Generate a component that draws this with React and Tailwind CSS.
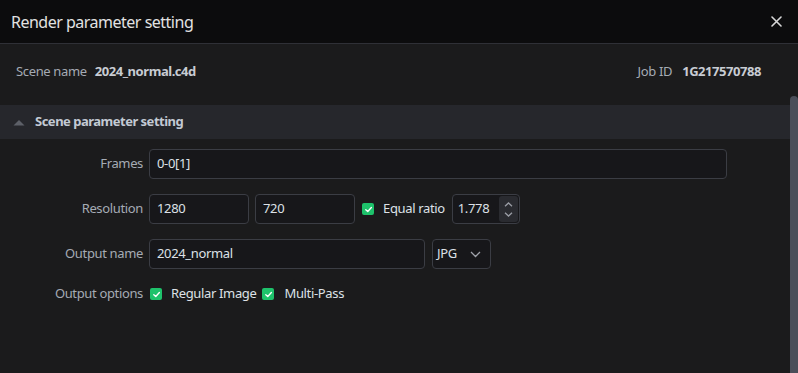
import React from "react";

const font = { fontFamily: '"Noto Sans", "Open Sans", sans-serif' };

function Check() {
  return (
    <span className="flex h-[12px] w-[12px] items-center justify-center rounded-[2px] bg-[#1ec26b]">
      <svg width="9" height="9" viewBox="0 0 10 10" fill="none">
        <path d="M2 5.2 L4.2 7.3 L8.2 2.8" stroke="#ffffff" strokeWidth="1.5" strokeLinecap="round" strokeLinejoin="round" />
      </svg>
    </span>
  );
}

function Label({ children }) {
  return <div className="w-[143px] shrink-0 text-right text-[13px] tracking-[-0.35px] text-[#a5abb4]">{children}</div>;
}

function Input({ value, className }) {
  return (
    <div className={"flex h-[30px] items-center rounded-[4px] border border-[#3b3d44] bg-[#17171a] px-[7px] text-[13px] tracking-[-0.35px] text-[#dde1e7] " + className}>
      {value}
    </div>
  );
}

export default function App() {
  return (
    <div style={font} className="flex h-[373px] w-[798px] flex-col overflow-hidden bg-[#1b1b1c]">
      <div className="flex h-[44px] shrink-0 items-center justify-between border-b border-[#2f3036] bg-[#0c0c0d] pl-[11px] pr-[16px]">
        <div className="text-[16px] tracking-[-0.5px] text-[#e2e2e2]">Render parameter setting</div>
        <svg width="11" height="11" viewBox="0 0 11 11">
          <path d="M1 1 L10 10 M10 1 L1 10" stroke="#d8d8d8" strokeWidth="1.6" strokeLinecap="round" />
        </svg>
      </div>
      <div className="relative flex-1">
        <div className="absolute right-0 top-[52px] bottom-0 w-[8px] rounded-t-[4px] bg-[#4a4e59]" />
        <div className="flex h-[61px] items-start justify-between pl-[16px] pr-[37px] pt-[18px] text-[13px] tracking-[-0.35px]">
          <div className="flex items-center">
            <span className="text-[#a5abb4]">Scene name</span>
            <span className="ml-[8px] font-bold tracking-[-0.45px] text-[#c8ccd3]">2024_normal.c4d</span>
          </div>
          <div className="flex items-center">
            <span className="text-[#a5abb4]">Job ID</span>
            <span className="ml-[10px] font-bold tracking-[-0.45px] text-[#c8ccd3]">1G217570788</span>
          </div>
        </div>
        <div className="mr-[8px] flex h-[34px] items-center bg-[#26272c] pl-[13px]">
          <svg width="12" height="7" viewBox="0 0 12 7">
            <path d="M0.5 6.5 L6 1 L11.5 6.5 Z" fill="#5d6068" />
          </svg>
          <span className="ml-[10px] text-[13px] font-bold tracking-[-0.5px] text-[#c3cad4]">Scene parameter setting</span>
        </div>
        <div className="flex flex-col gap-[15px] pt-[10px]">
          <div className="flex items-center gap-[6px]">
            <Label>Frames</Label>
            <Input value="0-0[1]" className="w-[578px]" />
          </div>
          <div className="flex items-center gap-[6px]">
            <Label>Resolution</Label>
            <Input value="1280" className="w-[100px]" />
            <Input value="720" className="w-[100px]" />
            <div className="ml-[1px] flex items-center">
              <Check />
              <span className="ml-[9px] text-[13px] tracking-[-0.35px] text-[#dde1e7]">Equal ratio</span>
            </div>
            <div className="ml-[1px] flex h-[30px] w-[68px] items-center justify-between rounded-[4px] border border-[#3b3d44] bg-[#17171a] pl-[5px] pr-[1px] text-[13px] tracking-[-0.35px] text-[#dde1e7]">
              <span>1.778</span>
              <div className="flex h-[26px] w-[19px] flex-col items-center justify-center gap-[5px] rounded-[3px] bg-[#2a2b30]">
                <svg width="9" height="5" viewBox="0 0 9 5"><path d="M1 4.2 L4.5 1 L8 4.2" stroke="#9a9da5" strokeWidth="1.3" fill="none" /></svg>
                <svg width="9" height="5" viewBox="0 0 9 5"><path d="M1 0.8 L4.5 4 L8 0.8" stroke="#9a9da5" strokeWidth="1.3" fill="none" /></svg>
              </div>
            </div>
          </div>
          <div className="flex items-center gap-[6px]">
            <Label>Output name</Label>
            <Input value="2024_normal" className="w-[276px]" />
            <div className="ml-[1px] flex h-[30px] w-[59px] items-center rounded-[4px] border border-[#3b3d44] bg-[#17171a] pl-[4px] text-[13px] tracking-[-0.35px] text-[#dde1e7]">
              <span>JPG</span>
              <svg className="ml-[13px]" width="11" height="7" viewBox="0 0 11 7"><path d="M1 1 L5.5 5.5 L10 1" stroke="#a0a3aa" strokeWidth="1.3" fill="none" /></svg>
            </div>
          </div>
          <div className="flex h-[20px] items-center gap-[6px]">
            <Label>Output options</Label>
            <div className="ml-[1px] flex items-center text-[13px] tracking-[-0.35px] text-[#dde1e7]">
              <Check />
              <span className="ml-[9px]">Regular Image</span>
              <span className="ml-[6px]"><Check /></span>
              <span className="ml-[10px]">Multi-Pass</span>
            </div>
          </div>
        </div>
      </div>
    </div>
  );
}
